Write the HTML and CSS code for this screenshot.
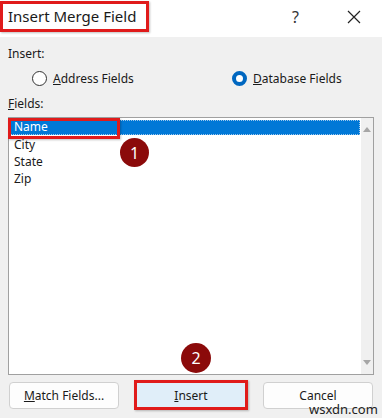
FILE: index.html
```html
<!DOCTYPE html>
<html lang="en">
<head>
    <meta charset="UTF-8">
    <title>Insert Merge Field</title>
    <link rel="stylesheet" href="styles.css">
</head>
<body>
    <div class="dialog">
        <div class="titlebar">
            <div class="title">Insert Merge Field</div>
            <div class="title-buttons">
                <span class="help">?</span>
                <svg class="close" width="14" height="14" viewBox="0 0 14 14">
                    <path d="M1 1 L13 13 M13 1 L1 13" stroke="#222" stroke-width="1.2" fill="none"/>
                </svg>
            </div>
        </div>
        <div class="content">
            <div class="label">Insert:</div>
            <div class="radios">
                <label class="radio"><span class="dot"></span><span><u>A</u>ddress Fields</span></label>
                <label class="radio"><span class="dot checked"></span><span><u>D</u>atabase Fields</span></label>
            </div>
            <div class="label fields-label"><u>F</u>ields:</div>
            <div class="listbox">
                <ul class="field-list">
                    <li class="selected">Name</li>
                    <li>City</li>
                    <li>State</li>
                    <li>Zip</li>
                </ul>
                <div class="scrollbar">
                    <span class="arrow up"></span>
                    <span class="arrow down"></span>
                </div>
            </div>
            <div class="buttons">
                <button class="btn"><u>M</u>atch Fields...</button>
                <button class="btn btn-insert"><u>I</u>nsert</button>
                <button class="btn">Cancel</button>
            </div>
        </div>

        <div class="mark mark-name"></div>
        <div class="badge badge-one">1</div>
        <div class="badge badge-two">2</div>
        <div class="watermark">wsxdn.com</div>
    </div>
</body>
</html>
```

FILE: styles.css
```css
* {
    box-sizing: border-box;
}
body {
    margin: 0;
    font-family: "Noto Sans", "Open Sans", sans-serif;
    color: #1a1a1a;
}
.dialog {
    position: relative;
    width: 382px;
    height: 418px;
    background-color: #f0f0f0;
    overflow: hidden;
}
.titlebar {
    height: 37px;
    background-color: #fff;
    display: flex;
    align-items: center;
    justify-content: space-between;
}
.title {
    margin-top: -4px;
    height: 31px;
    padding: 0 10px 0 5px;
    border: 3px solid #e01b1b;
    font-size: 15px;
    line-height: 25px;
    box-shadow: 1px 1px 2px rgba(0, 0, 0, 0.25);
}
.title-buttons {
    display: flex;
    align-items: center;
    gap: 48px;
    padding-right: 21px;
    margin-top: -4px;
}
.help {
    font-size: 16px;
    color: #333;
}
.content {
    padding: 9px 8px 0 8px;
    font-size: 12px;
}
.label {
    line-height: 16px;
}
.radios {
    display: grid;
    grid-template-columns: 200px auto;
    padding-left: 24px;
    margin-top: 6px;
    height: 20px;
    align-items: center;
}
.radio {
    display: flex;
    align-items: center;
    gap: 6px;
}
.dot {
    width: 15px;
    height: 15px;
    border: 1px solid #333;
    border-radius: 50%;
    background-color: #fff;
}
.dot.checked {
    border: 4px solid #0067c0;
}
.fields-label {
    margin-top: 8px;
}
.listbox {
    margin-top: 5px;
    height: 258px;
    border: 1px solid #a0a0a0;
    background-color: #fff;
    display: flex;
}
.field-list {
    flex: 1;
    list-style: none;
    margin: 0;
    padding: 2px 1px 0 1px;
}
.field-list li {
    height: 17px;
    line-height: 16px;
    padding-left: 4px;
}
.field-list li.selected {
    height: 15px;
    line-height: 14px;
    margin-bottom: 2px;
    background-color: #0078d7;
    color: #fff;
    outline: 1px dotted #9cc8ee;
    outline-offset: -1px;
}
.scrollbar {
    width: 12px;
    background-color: #f0f0f0;
    display: flex;
    flex-direction: column;
    justify-content: space-between;
    align-items: center;
    padding: 9px 0;
}
.arrow {
    width: 0;
    height: 0;
    border-left: 4px solid transparent;
    border-right: 4px solid transparent;
}
.arrow.up {
    border-bottom: 5px solid #a6a6a6;
}
.arrow.down {
    border-top: 5px solid #a6a6a6;
}
.buttons {
    display: flex;
    align-items: center;
    gap: 15px;
    margin-top: 5px;
    padding-left: 1px;
}
.btn {
    width: 110px;
    height: 27px;
    font-family: inherit;
    font-size: 12px;
    color: #1a1a1a;
    background-color: #fdfdfd;
    border: 1px solid #d0d0d0;
    border-radius: 4px;
    padding: 0;
}
.btn-insert {
    width: 114px;
    height: 30px;
    border: 3px solid #e01b1b;
    border-radius: 0;
    background-color: #e0eef9;
    box-shadow: 1px 1px 2px rgba(0, 0, 0, 0.25);
}
.mark {
    position: absolute;
    border: 3px solid #e01b1b;
    box-shadow: 1px 1px 2px rgba(0, 0, 0, 0.25);
}
.mark-name {
    left: 8px;
    top: 118px;
    width: 112px;
    height: 21px;
}
.badge {
    position: absolute;
    width: 29px;
    height: 29px;
    border-radius: 50%;
    background-color: #8b0a0a;
    color: #fff;
    font-size: 16px;
    display: flex;
    align-items: center;
    justify-content: center;
}
.badge-one {
    left: 120px;
    top: 138px;
}
.badge-two {
    left: 181px;
    top: 343px;
    width: 30px;
    height: 30px;
}
.watermark {
    position: absolute;
    left: 309px;
    top: 402px;
    font-size: 13px;
    line-height: 14px;
    color: #222;
}
```
